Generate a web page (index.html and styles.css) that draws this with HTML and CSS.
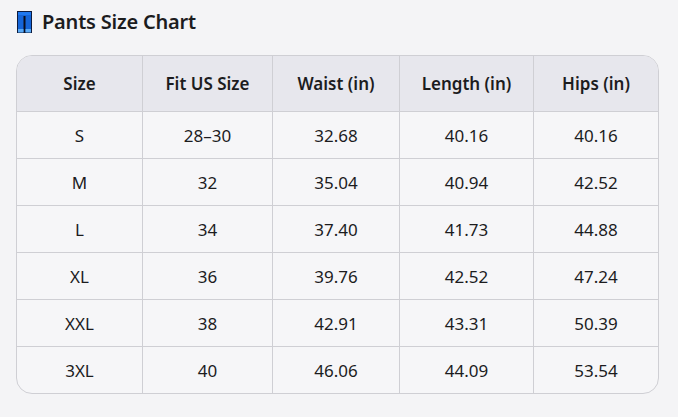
FILE: index.html
```html
<!DOCTYPE html>
<html>
<head>
<meta charset="utf-8">
<link rel="stylesheet" href="styles.css">
</head>
<body>
<div class="page">
  <h1 class="title">
    <svg class="icon" width="15" height="22" viewBox="0 0 15 22">
      <rect x="0.5" y="0.5" width="14" height="21" fill="#1565d8" stroke="#0d1b3d"/>
      <rect x="1" y="1" width="13" height="3" fill="#1e78f0"/>
      <rect x="6.5" y="5" width="2" height="16.5" fill="#0a0f1e"/>
      <rect x="1" y="18" width="5.5" height="3.5" fill="#5aaaf5"/>
      <rect x="8.5" y="18" width="5.5" height="3.5" fill="#5aaaf5"/>
    </svg>
    <span>Pants Size Chart</span>
  </h1>
  <div class="table-wrap">
    <table class="chart">
      <thead>
        <tr><th>Size</th><th>Fit US Size</th><th>Waist (in)</th><th>Length (in)</th><th>Hips (in)</th></tr>
      </thead>
      <tbody>
        <tr><td>S</td><td>28–30</td><td>32.68</td><td>40.16</td><td>40.16</td></tr>
        <tr><td>M</td><td>32</td><td>35.04</td><td>40.94</td><td>42.52</td></tr>
        <tr><td>L</td><td>34</td><td>37.40</td><td>41.73</td><td>44.88</td></tr>
        <tr><td>XL</td><td>36</td><td>39.76</td><td>42.52</td><td>47.24</td></tr>
        <tr><td>XXL</td><td>38</td><td>42.91</td><td>43.31</td><td>50.39</td></tr>
        <tr><td>3XL</td><td>40</td><td>46.06</td><td>44.09</td><td>53.54</td></tr>
      </tbody>
    </table>
  </div>
</div>
</body>
</html>
```
FILE: styles.css
```css
html, body {
  margin: 0;
  padding: 0;
  background: #f4f4f6;
}
body {
  font-family: "Noto Sans", "Open Sans", sans-serif;
  color: #1c1c1e;
}
.page {
  padding: 10px 19px 0 16px;
}
.title {
  display: flex;
  align-items: center;
  gap: 10px;
  margin: 0 0 22px 1px;
  font-size: 20px;
  font-weight: 600;
  height: 23px;
  letter-spacing: -0.2px;
}
.icon {
  display: block;
  flex: none;
}
.table-wrap {
  border: 1px solid #cfcfd4;
  border-radius: 16px;
  overflow: hidden;
  background: #f6f6f8;
}
.chart {
  width: 100%;
  border-collapse: collapse;
  table-layout: fixed;
}
.chart th, .chart td {
  text-align: center;
  border-left: 1px solid #cfcfd4;
  border-top: 1px solid #cfcfd4;
  font-size: 17px;
  padding: 0;
}
.chart th:first-child, .chart td:first-child {
  border-left: none;
}
.chart thead th {
  border-top: none;
  background: #e7e7ed;
  font-weight: 600;
  height: 55px;
}
.chart td {
  height: 46px;
}
.chart th:nth-child(1) { width: 125px; }
.chart th:nth-child(2) { width: 129px; }
.chart th:nth-child(3) { width: 126px; }
.chart th:nth-child(4) { width: 133px; }
```
